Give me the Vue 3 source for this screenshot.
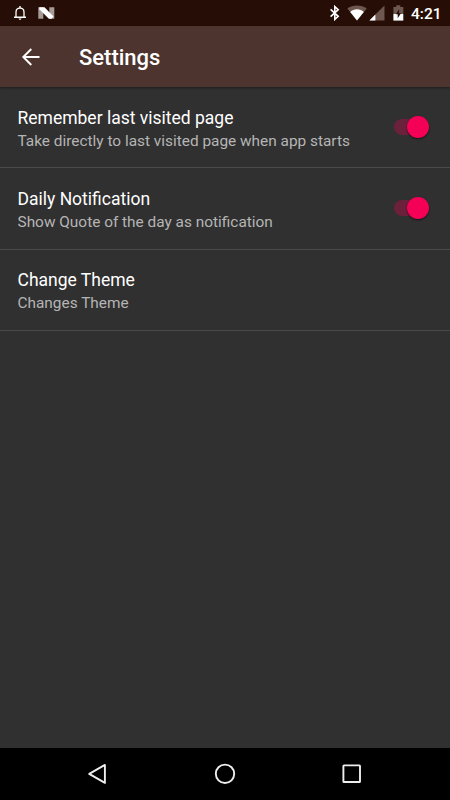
<template>
  <div class="screen">
    <header class="status-bar">
      <svg class="bell" width="14" height="16" viewBox="0 0 14 16">
        <path d="M3 12V7.200C3 4.700 4.500 3.200 7 3.200s4 1.500 4 4V12" fill="none" stroke="#fff" stroke-width="1.300" />
        <path d="M1 12.200h12M7 1v2" fill="none" stroke="#fff" stroke-width="1.400" />
        <path d="M5.400 13.500h3.200L7 15.200z" fill="#fff" />
      </svg>
      <svg class="nougat" width="17" height="14" viewBox="0 0 17 14">
        <path d="M.3 1.200h5v11.600h-5zM11.300 1.200h5v11.600h-5z" fill="#a69b97" />
        <path d="M1.300 1.200h5.200l9 9.200-2 2.400h-2.700L1.300 3.300z" fill="#fff" />
      </svg>
      <span class="spacer"></span>
      <svg class="bluetooth" width="12" height="16" viewBox="0 0 12 16">
        <path d="M1.600 4.300l7.600 7L5.800 14.400V1.600l3.400 3.100-7.600 7" fill="none" stroke="#fff" stroke-width="1.600" />
      </svg>
      <svg class="wifi" width="20" height="16" viewBox="0 0 20 16">
        <path d="M10 15.500L.3 3.600C3 1.500 6.300.4 10 .4s7 1.100 9.700 3.200z" fill="#6d574f" />
        <path d="M10 15.500L3.200 7C5.100 5.200 7.400 4.200 10 4.200s4.900 1 6.800 2.800z" fill="#fff" />
      </svg>
      <svg class="signal" width="16" height="16" viewBox="0 0 16 16">
        <path d="M.4 15.500L15.500.4v15.100z" fill="#6d574f" />
        <path d="M.4 15.500l6-6v6z" fill="#fff" />
      </svg>
      <svg class="battery" width="11" height="16" viewBox="0 0 11 16">
        <path d="M.4 1.900h2.900V.3h4v1.600h3V9H.4z" fill="#6d574f" />
        <path d="M.4 9h9.900v6.600H.4z" fill="#fff" />
        <path d="M6.100 4.300v4h1.900l-3.300 5v-4H2.900z" fill="#260d05" />
      </svg>
      <span class="clock">4:21</span>
    </header>

    <div class="toolbar">
      <svg class="back" width="20" height="20" viewBox="0 0 20 20">
        <path d="M18.500 10H2.500M10.300 2L2.300 10l8 8" fill="none" stroke="#fff" stroke-width="1.900" />
      </svg>
      <h1>Settings</h1>
    </div>

    <main class="preferences">
      <div v-for="item in items" :key="item.title" class="preference" @click="toggle(item)">
        <div class="labels">
          <div class="title">{{ item.title }}</div>
          <div class="summary">{{ item.summary }}</div>
        </div>
        <span v-if="item.toggleable" class="switch" :class="{ on: item.enabled }">
          <span class="thumb"></span>
        </span>
      </div>
    </main>

    <nav class="nav-bar">
      <svg width="24" height="24" viewBox="0 0 24 24">
        <path d="M18.900 2.900v18L3.200 11.900z" />
      </svg>
      <svg width="24" height="24" viewBox="0 0 24 24">
        <circle cx="12" cy="11.800" r="9.200" />
      </svg>
      <svg width="24" height="24" viewBox="0 0 24 24">
        <rect x="3.400" y="3.400" width="16.600" height="16.600" rx=".6" />
      </svg>
    </nav>
  </div>
</template>

<script setup>
import { ref } from 'vue'

const items = ref([
  {
    title: 'Remember last visited page',
    summary: 'Take directly to last visited page when app starts',
    toggleable: true,
    enabled: true
  },
  {
    title: 'Daily Notification',
    summary: 'Show Quote of the day as notification',
    toggleable: true,
    enabled: true
  },
  { title: 'Change Theme', summary: 'Changes Theme', toggleable: false }
])

function toggle(item) {
  if (item.toggleable) item.enabled = !item.enabled
}
</script>

<style>
body { margin: 0; background: #303030; }
</style>

<style scoped>
.screen {
  height: 100vh;
  display: flex;
  flex-direction: column;
  overflow: hidden;
  background: #303030;
  color: #fff;
  font-family: Roboto, sans-serif;
}
.screen svg { display: block; flex: none; }
.status-bar {
  flex: none;
  height: 26px;
  box-sizing: border-box;
  display: flex;
  align-items: center;
  padding: 0 8px 0 13px;
  background: #260d05;
}
.nougat { margin-left: 11px; }
.spacer { flex: 1; }
.wifi { margin-left: 6px; }
.signal { margin-left: 2px; }
.battery { margin-left: 8px; }
.clock {
  width: 31px;
  margin-left: 7px;
  padding-top: 2px;
  font-size: 15.5px;
  font-weight: 500;
  line-height: 24px;
  white-space: nowrap;
}
.toolbar {
  flex: none;
  height: 61px;
  box-sizing: border-box;
  display: flex;
  align-items: center;
  padding: 1px 20px 0 21px;
  background: #4e342e;
  box-shadow: 0 1px 2px rgba(0, 0, 0, 0.4);
  z-index: 1;
}
.toolbar h1 {
  margin: 0 0 0 38px;
  padding-top: 2px;
  font-size: 22px;
  font-weight: 500;
  line-height: 28px;
}
.preferences { flex: 1; }
.preference {
  height: 81.3px;
  box-sizing: border-box;
  display: flex;
  align-items: center;
  justify-content: space-between;
  padding: 0 21px 0 17.5px;
  border-bottom: 1px solid #4b4b4b;
}
.labels { padding-top: 4px; }
.title { font-size: 17.5px; line-height: 23px; }
.summary { font-size: 15.4px; line-height: 22px; color: #b5b5b5; }
.switch {
  width: 35px;
  height: 22px;
  display: flex;
  align-items: center;
  background: linear-gradient(#5c5c5c, #5c5c5c) center / 35px 16px no-repeat;
}
.switch .thumb {
  width: 22px;
  height: 22px;
  border-radius: 50%;
  background: #bdbdbd;
  box-shadow: 0 1px 2px rgba(0, 0, 0, 0.6);
}
.switch.on { background: none; justify-content: flex-end; }
.switch.on::before {
  content: '';
  width: 24px;
  height: 16px;
  margin-right: -11px;
  border-radius: 8px 0 0 8px;
  background: #6b213b;
}
.switch.on .thumb { background: #f50057; z-index: 1; }
.nav-bar {
  flex: none;
  height: 52px;
  box-sizing: border-box;
  display: flex;
  justify-content: space-between;
  align-items: center;
  padding: 0 86px;
  background: #000;
}
.nav-bar svg {
  fill: none;
  stroke: #eee;
  stroke-width: 1.9;
  stroke-linejoin: round;
}
</style>
